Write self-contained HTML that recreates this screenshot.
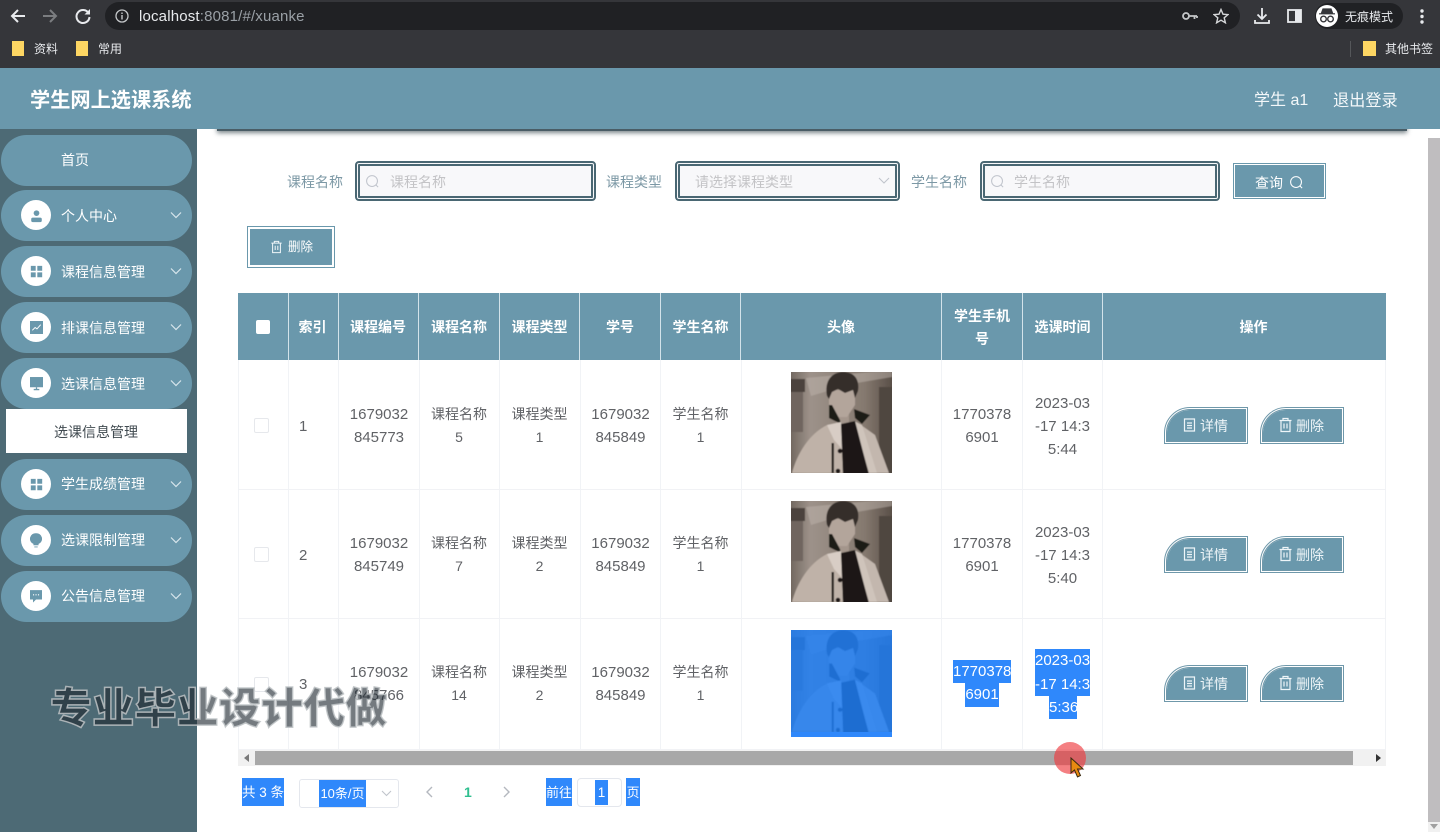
<!DOCTYPE html>
<html lang="zh"><head><meta charset="utf-8"><title>学生网上选课系统</title>
<style>
html,body{margin:0;padding:0;width:1440px;height:832px;overflow:hidden;background:#fff}
body{position:relative;font-family:"Liberation Sans","Noto Sans CJK SC",sans-serif;font-size:14px;color:#606266;filter:blur(.25px)}
div,span,svg{position:absolute;box-sizing:border-box}
.t{white-space:nowrap;line-height:1}
.m{left:1px;width:191px;height:51px;border-radius:26px;background:#6a98ac}
.ci{left:21px;width:30px;height:30px;border-radius:50%;background:#fff}
.ml{left:61px;color:#fff;font-size:14px;white-space:nowrap;line-height:20px}
.ch{left:170px;width:12px;height:8px}
.inp{border:5px double #4a6773;border-radius:4px;background:#f8f8fa;top:161px;height:40px}
.lb{top:175px;color:#7c98a5;font-size:14px;line-height:14px;white-space:nowrap}
.ph{top:175px;color:#c3c3c6;font-size:14px;line-height:14px;white-space:nowrap}
.th{top:293px;height:67px;padding-top:2px;background:#6a98ac;color:#fff;font-weight:700;font-size:14px;line-height:23px;display:flex;align-items:center;justify-content:center;text-align:center;border-right:1px solid #d3e3ea}
.c{display:flex;align-items:center;justify-content:center;text-align:center;height:46px;line-height:23px;font-size:14px;color:#606266}
.c.n{font-size:15px}
.vl{top:360px;height:390px;width:1px;background:#f1f3f6}
.hl{left:238px;width:1148px;height:1px;background:#f1f2f5}
.b{width:84px;height:37px;border:3px double #6f98aa;border-top-left-radius:26px;background:#6a98ac;background-clip:padding-box;color:#eef5f8;font-size:14px}
.b span{top:8px;left:33px;white-space:nowrap;line-height:17px}
.b svg{left:15px;top:7px;width:15px;height:16px}
.cb{left:254px;width:15px;height:15px;border:1px solid #e6e8ec;border-radius:2px;background:#fff}
.sel{background:#2f88fb;color:#fff;font-size:15px;line-height:23px;text-align:center;white-space:nowrap}
</style></head><body>
<svg width="0" height="0" style="left:0;top:0"><defs>
<symbol id="chev" viewBox="0 0 12 8"><path d="M1 1.5L6 6.5L11 1.5" fill="none" stroke="#d8e6ec" stroke-width="1.2"/></symbol>
<symbol id="trash" viewBox="0 0 15 16"><path d="M1.5 3.5H13.5M5 3.5V1.5H10V3.5M3 3.5V14.5H12V3.5M6 6.5V11.5M9 6.5V11.5" fill="none" stroke="#eef5f8" stroke-width="1.2"/></symbol>
<symbol id="doc" viewBox="0 0 15 16"><path d="M2.5 2H12.5V14H2.5ZM5 6H10M5 8.5H10M5 11H10" fill="none" stroke="#eef5f8" stroke-width="1.2"/></symbol>
<symbol id="srch" viewBox="0 0 16 16"><circle cx="7.5" cy="7.5" r="5.8" fill="none" stroke="currentColor" stroke-width="1.1"/><path d="M11.5 11.5L14 14" stroke="currentColor" stroke-width="1.1"/></symbol>
<symbol id="grid" viewBox="0 0 16 16"><path d="M1 1H7V7H1ZM9 1H15V7H9ZM1 9H7V15H1ZM9 9H15V15H9Z" fill="#6a98ac"/></symbol>
<symbol id="photo" viewBox="0 0 101 101" preserveAspectRatio="none">
<defs><linearGradient id="bg" x1="0" x2="1" y1="0" y2="0"><stop offset="0" stop-color="#6f655d"/><stop offset=".2" stop-color="#9d928a"/><stop offset=".72" stop-color="#85796f"/><stop offset="1" stop-color="#574d46"/></linearGradient><filter id="sf"><feGaussianBlur stdDeviation=".6"/></filter></defs>
<g filter="url(#sf)">
<rect x="-2" y="-2" width="105" height="105" fill="url(#bg)"/>
<rect x="-2" y="7" width="16" height="13" fill="#4b433e"/><rect x="-2" y="20" width="14" height="40" fill="#6f655e"/>
<path d="M15 6L101 -2V5L60 12L20 24Z" fill="#bdb3ac" opacity=".5"/><rect x="88" y="15" width="15" height="88" fill="#4f4640"/>
<path d="M45 38H58V54H45Z" fill="#a4968c"/>
<path d="M38 18H64L64 33L56 45H46L38 34Z" fill="#b3a59b"/>
<path d="M36 24C33 9 41 0 52 0C62 0 69 6 67 19L64 26L62 18L54 21L47 17L41 20L38 27Z" fill="#352d29"/>
<path d="M38 33L41 33L49 48L50 52L38 46Z" fill="#1f1a18"/>
<path d="M63 37L79 43L71 52L64 46Z" fill="#1f1a18"/>
<path d="M36 53C18 62 6 82 1 101H52L51 76Z" fill="#bfb2a8"/>
<path d="M36 53L50 50L52 78L43 68Z" fill="#d8cdc5"/>
<path d="M70 53L84 63L98 101H78Z" fill="#c3b7ae"/>
<path d="M63 49L71 53L86 101H78Z" fill="#cfc4bb"/>
<path d="M50 52L64 49L78 103H52Z" fill="#1b1716"/>
<path d="M40.500 71H43V101H40.500Z" fill="#2b2522"/><circle cx="49" cy="79" r="2.300" fill="#1b1716"/><circle cx="47" cy="99" r="2.300" fill="#1b1716"/>
</g>
</symbol>
</defs></svg>

<!-- browser chrome -->
<div style="left:0;top:0;width:1440px;height:68px;background:#35363a"></div>
<div style="left:105px;top:2px;width:1135px;height:28px;border-radius:14px;background:#202124"></div>
<svg style="left:9px;top:7px" width="18" height="18" viewBox="0 0 18 18"><path d="M16 9H3M9 3L3 9L9 15" fill="none" stroke="#e8eaed" stroke-width="2"/></svg>
<svg style="left:41px;top:7px" width="18" height="18" viewBox="0 0 18 18"><path d="M2 9H15M9 3L15 9L9 15" fill="none" stroke="#7b7d80" stroke-width="2"/></svg>
<svg style="left:74px;top:7px" width="18" height="18" viewBox="0 0 18 18"><path d="M14.5 6A6.5 6.5 0 1 0 15.5 10" fill="none" stroke="#e8eaed" stroke-width="2"/><path d="M16 2V7.5H10.5Z" fill="#e8eaed"/></svg>
<svg style="left:115px;top:9px" width="14" height="14" viewBox="0 0 14 14"><circle cx="7" cy="7" r="6" fill="none" stroke="#c4c7c9" stroke-width="1.3"/><path d="M7 6V10.5M7 3.5V5" stroke="#c4c7c9" stroke-width="1.4"/></svg>
<div class="t" style="left:139px;top:9px;font-size:15px;letter-spacing:.17px;color:#e8eaed">localhost<span style="position:static;color:#9aa0a6">:8081/#/xuanke</span></div>
<svg style="left:1182px;top:11px" width="16" height="10" viewBox="0 0 16 10"><circle cx="4" cy="5" r="3" fill="none" stroke="#c4c7c9" stroke-width="1.8"/><path d="M7 5H15M12.5 5V8M15 5V7" stroke="#c4c7c9" stroke-width="1.8"/></svg>
<svg style="left:1213px;top:8px" width="16" height="16" viewBox="0 0 16 16"><path d="M8 1.5L10 6.2L15 6.6L11.2 9.8L12.4 14.8L8 12.2L3.6 14.8L4.8 9.8L1 6.6L6 6.2Z" fill="none" stroke="#d5d7d9" stroke-width="1.4"/></svg>
<svg style="left:1254px;top:7px" width="16" height="18" viewBox="0 0 16 18"><path d="M8 1V12M3.5 7.5L8 12L12.5 7.5M1 13V16H15V13" fill="none" stroke="#e8eaed" stroke-width="1.8"/></svg>
<svg style="left:1287px;top:9px" width="15" height="14" viewBox="0 0 15 14"><rect x="1" y="1" width="13" height="12" fill="none" stroke="#e8eaed" stroke-width="1.8"/><rect x="8" y="1" width="6" height="12" fill="#e8eaed"/></svg>
<div style="left:1315px;top:3px;width:88px;height:26px;border-radius:13px;background:#202124"></div>
<div style="left:1316px;top:5px;width:22px;height:22px;border-radius:50%;background:#fff"></div>
<svg style="left:1318px;top:8px" width="18" height="16" viewBox="0 0 18 16"><path d="M5 1H13L14.500 5H3.500ZM1 5.800H17" fill="#35363a" stroke="#35363a" stroke-width="1.200"/><circle cx="5.500" cy="11" r="2.800" fill="none" stroke="#35363a" stroke-width="1.400"/><circle cx="12.500" cy="11" r="2.800" fill="none" stroke="#35363a" stroke-width="1.400"/></svg>
<div class="t" style="left:1345px;top:11px;font-size:12px;color:#e8eaed">无痕模式</div>
<svg style="left:1420px;top:9px" width="4" height="15" viewBox="0 0 4 15"><circle cx="2" cy="2" r="1.700" fill="#e8eaed"/><circle cx="2" cy="7.500" r="1.700" fill="#e8eaed"/><circle cx="2" cy="13" r="1.700" fill="#e8eaed"/></svg>
<div style="left:12px;top:41px;width:12px;height:15px;background:#fdd663"></div>
<div class="t" style="left:34px;top:43px;font-size:12px;color:#e8eaed">资料</div>
<div style="left:76px;top:41px;width:12px;height:15px;background:#fdd663"></div>
<div class="t" style="left:98px;top:43px;font-size:12px;color:#e8eaed">常用</div>
<div style="left:1350px;top:41px;width:1px;height:16px;background:#55575a"></div>
<div style="left:1363px;top:41px;width:13px;height:15px;background:#fdd663"></div>
<div class="t" style="left:1385px;top:43px;font-size:12px;color:#e8eaed">其他书签</div>

<!-- shadow + header -->
<div style="left:217px;top:118px;width:1190px;height:13px;background:#4a5d66;box-shadow:0 2px 5px rgba(50,68,76,.65)"></div>
<div style="left:0;top:68px;width:1440px;height:61px;background:#6a98ac"></div>
<div class="t" style="left:30px;top:90px;font-size:20.200px;font-weight:700;color:#fff;padding-top:1px">学生网上选课系统</div>
<div class="t" style="left:1254px;top:92px;font-size:16px;color:#f4f8fa;padding-top:1px">学生 a1</div>
<div class="t" style="left:1333px;top:92px;font-size:16.200px;color:#f4f8fa;padding-top:1px">退出登录</div>

<!-- sidebar -->
<div style="left:0;top:129px;width:197px;height:703px;background:#4d6a75"></div>
<div class="m" style="top:134.500px"></div><div class="ml" style="top:150px">首页</div>

<div class="m" style="top:190.300px"></div><div class="ci" style="top:200px"></div>
<svg style="left:30px;top:209px" width="13" height="14" viewBox="0 0 16 16"><circle cx="8" cy="4.500" r="3.500" fill="#6a98ac"/><rect x="1.500" y="10" width="13" height="5.500" rx="2" fill="#6a98ac"/></svg>
<div class="ml" style="top:206px">个人中心</div><svg class="ch" style="top:211px"><use href="#chev"/></svg>

<div class="m" style="top:246.300px"></div><div class="ci" style="top:256px"></div>
<svg style="left:30px;top:265px" width="13" height="13"><use href="#grid"/></svg>
<div class="ml" style="top:262px">课程信息管理</div><svg class="ch" style="top:267px"><use href="#chev"/></svg>

<div class="m" style="top:302.200px"></div><div class="ci" style="top:312px"></div>
<svg style="left:30px;top:321px" width="13" height="13" viewBox="0 0 14 14"><rect width="14" height="14" fill="#6a98ac"/><path d="M2.500 10L5.500 7L7.500 8.500L11.500 4" fill="none" stroke="#fff" stroke-width="1"/></svg>
<div class="ml" style="top:318px">排课信息管理</div><svg class="ch" style="top:323px"><use href="#chev"/></svg>

<div class="m" style="top:358px"></div><div class="ci" style="top:368px"></div>
<svg style="left:30px;top:377px" width="13" height="14" viewBox="0 0 14 15"><rect width="14" height="11" fill="#6a98ac"/><path d="M4 13.500H10M7 11V13.500" stroke="#6a98ac" stroke-width="1.400"/></svg>
<div class="ml" style="top:374px">选课信息管理</div><svg class="ch" style="top:379px"><use href="#chev"/></svg>
<div style="left:6px;top:409px;width:181px;height:44px;background:#fff"></div>
<div class="ml" style="left:54px;top:422px;color:#404a50">选课信息管理</div>

<div class="m" style="top:459px"></div><div class="ci" style="top:469px"></div>
<svg style="left:30px;top:478px" width="13" height="13"><use href="#grid"/></svg>
<div class="ml" style="top:474px">学生成绩管理</div><svg class="ch" style="top:480px"><use href="#chev"/></svg>

<div class="m" style="top:515px"></div><div class="ci" style="top:525px"></div>
<svg style="left:30px;top:533px" width="12" height="15" viewBox="0 0 14 17"><path d="M7 0A6.500 6.500 0 0 0 4 12.500V14H10V12.500A6.500 6.500 0 0 0 7 0ZM5 15.500H9V16.500H5Z" fill="#6a98ac"/></svg>
<div class="ml" style="top:530px">选课限制管理</div><svg class="ch" style="top:536px"><use href="#chev"/></svg>

<div class="m" style="top:570.600px"></div><div class="ci" style="top:581px"></div>
<svg style="left:30px;top:590px" width="12" height="13" viewBox="0 0 14 15"><path d="M0 0H14V11H7L3.500 14.500V11H0Z" fill="#6a98ac"/><path d="M3.500 5.500H4.800M6.400 5.500H7.700M9.300 5.500H10.600" stroke="#fff" stroke-width="1.300"/></svg>
<div class="ml" style="top:586px">公告信息管理</div><svg class="ch" style="top:592px"><use href="#chev"/></svg>

<!-- page scrollbar -->
<div style="left:1428px;top:138px;width:12px;height:694px;background:#bfbdbf"></div>
<div style="left:1428px;top:822px;width:12px;height:10px;background:#f1f1f1"></div>
<svg style="left:1430px;top:824px" width="9" height="6"><path d="M0 0H8L4 5Z" fill="#a0a0a0"/></svg>

<!-- search row -->
<div class="lb" style="left:287px">课程名称</div>
<div class="inp" style="left:355px;width:241px"></div>
<svg style="left:365px;top:174px;color:#c0c4cc" width="15" height="15"><use href="#srch"/></svg>
<div class="ph" style="left:390px">课程名称</div>
<div class="lb" style="left:606px">课程类型</div>
<div class="inp" style="left:675px;width:225px"></div>
<div class="ph" style="left:695px">请选择课程类型</div>
<svg style="left:878px;top:177px" width="12" height="8"><path d="M1 1L6 6L11 1" fill="none" stroke="#c0c4cc" stroke-width="1.100"/></svg>
<div class="lb" style="left:911px">学生名称</div>
<div class="inp" style="left:980px;width:240px"></div>
<svg style="left:990px;top:174px;color:#c0c4cc" width="15" height="15"><use href="#srch"/></svg>
<div class="ph" style="left:1014px">学生名称</div>
<div style="left:1233px;top:163px;width:93px;height:36px;border:3px double #6a98ac;background:#6a98ac;background-clip:padding-box"></div>
<div class="t" style="left:1255px;top:176px;font-size:14px;color:#fff">查询</div>
<svg style="left:1289px;top:175px;color:#fff" width="15" height="15"><use href="#srch"/></svg>
<div style="left:247px;top:226px;width:88px;height:42px;border:4px double #6a98ac;background:#6a98ac;background-clip:padding-box"></div>
<svg style="left:270px;top:240px" width="13" height="14" viewBox="0 0 15 16"><use href="#trash"/></svg>
<div class="t" style="left:288px;top:240px;font-size:12.500px;color:#fff;padding-top:1px">删除</div>

<!-- table head -->
<div class="th" style="left:238px;width:51px"></div>
<div style="left:256px;top:320px;width:14px;height:14px;background:#fff;border-radius:2px"></div>
<div class="th" style="left:289px;width:50px;padding-right:2px">索引</div>
<div class="th" style="left:339px;width:80px;padding-right:1px">课程编号</div>
<div class="th" style="left:419px;width:81px">课程名称</div>
<div class="th" style="left:500px;width:80px">课程类型</div>
<div class="th" style="left:580px;width:81px">学号</div>
<div class="th" style="left:661px;width:80px">学生名称</div>
<div class="th" style="left:741px;width:201px">头像</div>
<div class="th" style="left:942px;width:81px;padding:2px 8px 0">学生手机号</div>
<div class="th" style="left:1023px;width:80px">选课时间</div>
<div class="th" style="left:1103px;width:283px;border-right:0;padding-left:18px">操作</div>

<!-- grid lines -->
<div class="vl" style="left:238px"></div><div class="vl" style="left:288px"></div><div class="vl" style="left:338px"></div><div class="vl" style="left:419px"></div><div class="vl" style="left:499px"></div><div class="vl" style="left:580px"></div><div class="vl" style="left:660px"></div><div class="vl" style="left:741px"></div><div class="vl" style="left:941px"></div><div class="vl" style="left:1022px"></div><div class="vl" style="left:1102px"></div><div class="vl" style="left:1385px"></div>
<div class="hl" style="top:489px"></div><div class="hl" style="top:618px"></div><div class="hl" style="top:749px"></div>

<!-- row 1 -->
<div class="cb" style="top:418px"></div>
<div class="c n" style="left:299px;top:403px">1</div>
<div class="c n" style="left:339px;width:80px;top:403px">1679032<br>845773</div>
<div class="c" style="left:418px;width:82px;top:403px">课程名称<br>5</div>
<div class="c" style="left:499px;width:81px;top:403px">课程类型<br>1</div>
<div class="c n" style="left:580px;width:81px;top:403px">1679032<br>845849</div>
<div class="c" style="left:660px;width:81px;top:403px">学生名称<br>1</div>
<svg style="left:791px;top:372px" width="101" height="101"><use href="#photo"/></svg>
<div class="c n" style="left:942px;width:80px;top:403px">1770378<br>6901</div>
<div class="c n" style="left:1023px;width:79px;top:391px;height:70px">2023-03<br>-17 14:3<br>5:44</div>
<div class="b" style="left:1164px;top:407px"><svg><use href="#doc"/></svg><span>详情</span></div>
<div class="b" style="left:1260px;top:407px"><svg><use href="#trash"/></svg><span>删除</span></div>

<!-- row 2 -->
<div class="cb" style="top:547px"></div>
<div class="c n" style="left:299px;top:532px">2</div>
<div class="c n" style="left:339px;width:80px;top:532px">1679032<br>845749</div>
<div class="c" style="left:418px;width:82px;top:532px">课程名称<br>7</div>
<div class="c" style="left:499px;width:81px;top:532px">课程类型<br>2</div>
<div class="c n" style="left:580px;width:81px;top:532px">1679032<br>845849</div>
<div class="c" style="left:660px;width:81px;top:532px">学生名称<br>1</div>
<svg style="left:791px;top:501px" width="101" height="101"><use href="#photo"/></svg>
<div class="c n" style="left:942px;width:80px;top:532px">1770378<br>6901</div>
<div class="c n" style="left:1023px;width:79px;top:520px;height:70px">2023-03<br>-17 14:3<br>5:40</div>
<div class="b" style="left:1164px;top:536px"><svg><use href="#doc"/></svg><span>详情</span></div>
<div class="b" style="left:1260px;top:536px"><svg><use href="#trash"/></svg><span>删除</span></div>

<!-- row 3 -->
<div class="cb" style="top:677px"></div>
<div class="c n" style="left:299px;top:661px">3</div>
<div class="c n" style="left:339px;width:80px;top:661px">1679032<br>845766</div>
<div class="c" style="left:418px;width:82px;top:661px">课程名称<br>14</div>
<div class="c" style="left:499px;width:81px;top:661px">课程类型<br>2</div>
<div class="c n" style="left:580px;width:81px;top:661px">1679032<br>845849</div>
<div class="c" style="left:660px;width:81px;top:661px">学生名称<br>1</div>
<svg style="left:791px;top:630px;filter:grayscale(1)" width="101" height="102"><use href="#photo"/></svg>
<div style="left:791px;top:630px;width:101px;height:107px;background:#1f7ef5;opacity:.84"></div>
<div style="left:791px;top:732px;width:101px;height:5px;background:#2f88fb"></div>
<div class="sel" style="left:953px;top:660px;width:58px;height:23px">1770378</div>
<div class="sel" style="left:965px;top:683px;width:34px;height:24px">6901</div>
<div class="sel" style="left:1035px;top:649px;width:55px;height:24px">2023-03</div>
<div class="sel" style="left:1035px;top:673px;width:55px;height:23px">-17 14:3</div>
<div class="sel" style="left:1049px;top:696px;width:28px;height:23px">5:36</div>
<div class="b" style="left:1164px;top:665px"><svg><use href="#doc"/></svg><span>详情</span></div>
<div class="b" style="left:1260px;top:665px"><svg><use href="#trash"/></svg><span>删除</span></div>

<!-- horizontal scrollbar -->
<div style="left:238px;top:750px;width:1148px;height:16px;background:#f1f1f1"></div>
<div style="left:255px;top:751px;width:1098px;height:14px;background:#a8a8a8"></div>
<svg style="left:244px;top:754px" width="6" height="8"><path d="M5 0V8L0 4Z" fill="#7a7a7a"/></svg>
<svg style="left:1376px;top:754px" width="6" height="8"><path d="M0 0V8L5 4Z" fill="#333"/></svg>

<!-- pagination -->
<div class="sel" style="left:242px;top:778px;width:42px;height:28px;font-size:13.500px;line-height:29px">共 3 条</div>
<div style="left:299px;top:779px;width:100px;height:29px;border:1px solid #e4e7ed;border-radius:3px;background:#fff"></div>
<div class="sel" style="left:319px;top:780px;width:47px;height:27px;font-size:13px;line-height:27px">10条/页</div>
<svg style="left:381px;top:790px" width="11" height="7"><path d="M1 1L5.500 5.500L10 1" fill="none" stroke="#c0c4cc" stroke-width="1.100"/></svg>
<svg style="left:425px;top:786px" width="8" height="12"><path d="M7 1L2 6L7 11" fill="none" stroke="#b4b8bf" stroke-width="1.400"/></svg>
<div class="t" style="left:464px;top:785px;font-size:14px;font-weight:700;color:#2fbf8f">1</div>
<svg style="left:503px;top:786px" width="8" height="12"><path d="M1 1L6 6L1 11" fill="none" stroke="#b4b8bf" stroke-width="1.400"/></svg>
<div class="sel" style="left:546px;top:778px;width:26px;height:28px;font-size:13px;line-height:29px">前往</div>
<div style="left:577px;top:778px;width:45px;height:29px;border:1px solid #e4e7ed;border-radius:4px;background:#fff"></div>
<div class="sel" style="left:595px;top:780px;width:13px;height:25px;font-size:13.500px;line-height:25px">1</div>
<div class="sel" style="left:626px;top:778px;width:14px;height:28px;font-size:13px;line-height:29px">页</div>

<!-- watermark -->
<div class="t" style="left:50px;top:685px;font-size:42px;font-weight:900;font-family:'Noto Sans CJK SC','Liberation Sans',sans-serif;color:rgba(30,40,48,.62);-webkit-text-stroke:1.500px rgba(190,195,198,.85);letter-spacing:.2px">专业毕业设计代做</div>

<!-- cursor -->
<div style="left:1054px;top:742px;width:32px;height:32px;border-radius:50%;background:rgba(238,60,66,.66)"></div>
<svg style="left:1070px;top:757px" width="15" height="22" viewBox="0 0 15 22"><path d="M1 1V16L4.500 13L7.500 20L10.500 18.500L7.500 12H13Z" fill="#e88a10" stroke="#3a2a10" stroke-width="1"/></svg>
</body></html>
